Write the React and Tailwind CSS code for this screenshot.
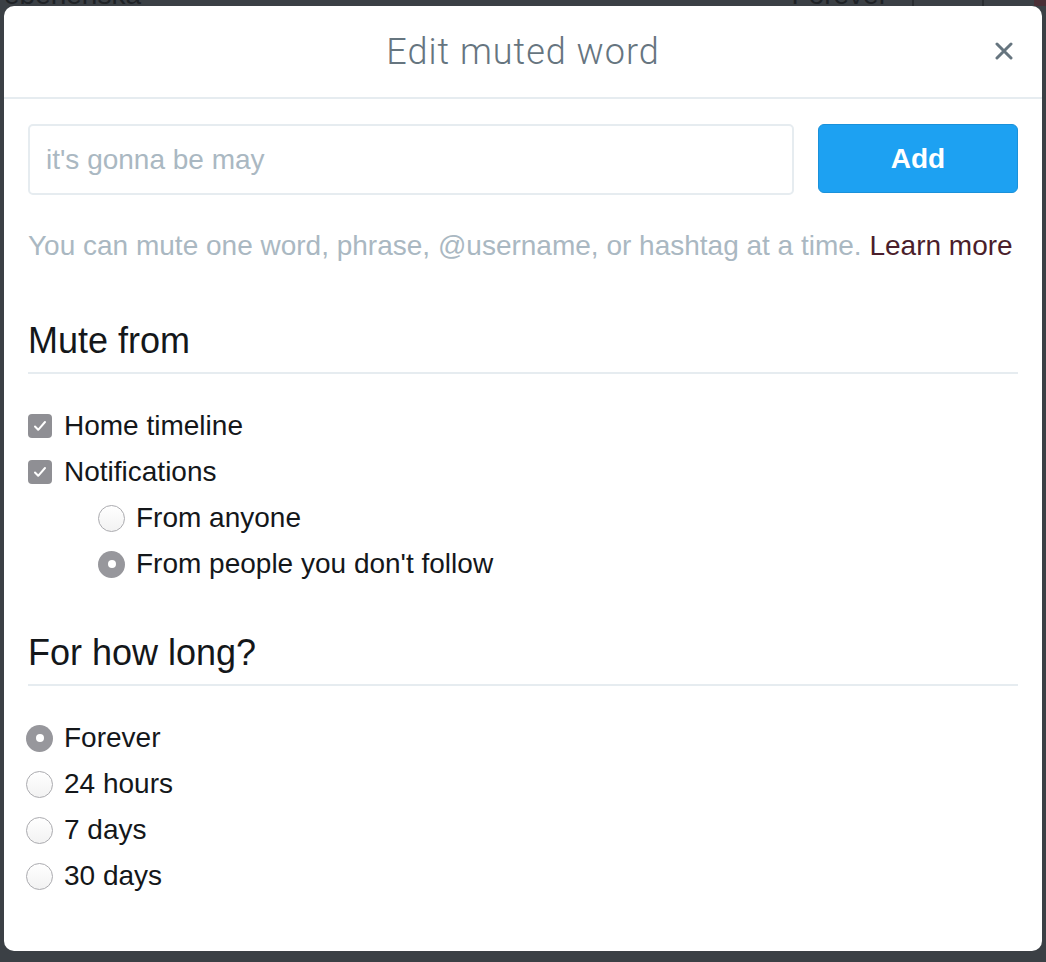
import React from "react";

const SANS = { fontFamily: '"Liberation Sans", Arial, Helvetica, sans-serif' };

function Check() {
  return (
    <span className="flex h-[24px] w-[24px] shrink-0 items-center justify-center rounded-[4px] bg-[#8f8f94]">
      <svg width="18" height="18" viewBox="0 0 18 18" fill="none">
        <path d="M4 9.5l3.2 3.3L14 5" stroke="white" strokeWidth="2" strokeLinecap="round" strokeLinejoin="round" />
      </svg>
    </span>
  );
}

function Radio({ on }) {
  return on ? (
    <span className="flex h-[27px] w-[27px] shrink-0 items-center justify-center rounded-full bg-[#97979c]">
      <span className="h-[8px] w-[8px] rounded-full bg-white" />
    </span>
  ) : (
    <span className="h-[27px] w-[27px] shrink-0 rounded-full border border-[#ababaf] bg-gradient-to-b from-white to-[#f2f2f2]" />
  );
}

function Row({ children, label, gap = "gap-[12px]" }) {
  return (
    <div className={`flex h-[46px] items-center ${gap} text-[28px] leading-[46px] text-[#14171a]`}>
      {children}
      <span>{label}</span>
    </div>
  );
}

function Heading({ children }) {
  return (
    <div className="border-b-2 border-[#e6ecf0] pb-[11px] text-[36px] leading-[40px] text-[#14171a]">
      {children}
    </div>
  );
}

export default function App() {
  return (
    <div className="relative h-[962px] w-[1046px] overflow-hidden bg-[#3b4045]" style={SANS}>
      {/* page behind the overlay */}
      <div className="flex h-[6px] overflow-hidden text-[28px] leading-[28px] text-[#1e2226]">
        <div className="-mt-[19px] flex w-full items-start">
          <span className="ml-[4px]">ebehenska</span>
          <span className="ml-auto">Forever</span>
          <span className="ml-[24px] h-[40px] w-[2px] bg-[#2a2e32]" />
          <span className="ml-[68px] h-[40px] w-[2px] bg-[#2a2e32]" />
          <span className="ml-[50px] h-[40px] w-[12px] bg-[#4a2f36]" />
        </div>
      </div>

      {/* modal */}
      <div className="absolute left-[4px] top-[6px] flex h-[945px] w-[1038px] flex-col rounded-[10px] bg-white">
        <div className="relative flex h-[93px] shrink-0 items-center justify-center border-b-2 border-[#e6ecf0]">
          <span
            className="text-[36px] font-light leading-[40px] tracking-[1px] text-[#66757f]"
            style={{ fontFamily: 'Roboto, "Liberation Sans", sans-serif' }}
          >
            Edit muted word
          </span>
          <button className="absolute right-[29px] top-[36px] flex h-[18px] w-[18px] items-center justify-center">
            <svg width="18" height="18" viewBox="0 0 18 18">
              <path d="M2 2L16 16M16 2L2 16" stroke="#66757f" strokeWidth="3" strokeLinecap="round" />
            </svg>
          </button>
        </div>

        <div className="flex flex-col px-[24px]">
          <div className="mt-[25px] flex items-start gap-[24px]">
            <div className="flex h-[71px] flex-1 items-center rounded-[5px] border-2 border-[#e6ecf0] px-[16px] text-[28px] text-[#aab8c2]">
              it's gonna be may
            </div>
            <button className="flex h-[69px] w-[200px] items-center justify-center rounded-[6px] border border-[#1a91da] bg-[#1da1f2] text-[28px] font-bold text-white">
              Add
            </button>
          </div>

          <div className="mt-[33px] whitespace-nowrap text-[28px] leading-[36px] text-[#aab8c2]">
            You can mute one word, phrase, @username, or hashtag at a time.{" "}
            <span className="text-[#4b1e2b]">Learn more</span>
          </div>

          <div className="mt-[57px]">
            <Heading>Mute from</Heading>
          </div>

          <div className="mt-[29px] flex flex-col">
            <Row label="Home timeline">
              <Check />
            </Row>
            <Row label="Notifications">
              <Check />
            </Row>
            <div className="pl-[70px]">
              <Row label="From anyone" gap="gap-[11px]">
                <Radio />
              </Row>
              <Row label="From people you don't follow" gap="gap-[11px]">
                <Radio on />
              </Row>
            </div>
          </div>

          <div className="mt-[46px]">
            <Heading>For how long?</Heading>
          </div>

          <div className="mt-[29px] -ml-[2px] flex flex-col">
            <Row label="Forever" gap="gap-[11px]">
              <Radio on />
            </Row>
            <Row label="24 hours" gap="gap-[11px]">
              <Radio />
            </Row>
            <Row label="7 days" gap="gap-[11px]">
              <Radio />
            </Row>
            <Row label="30 days" gap="gap-[11px]">
              <Radio />
            </Row>
          </div>
        </div>
      </div>
    </div>
  );
}
